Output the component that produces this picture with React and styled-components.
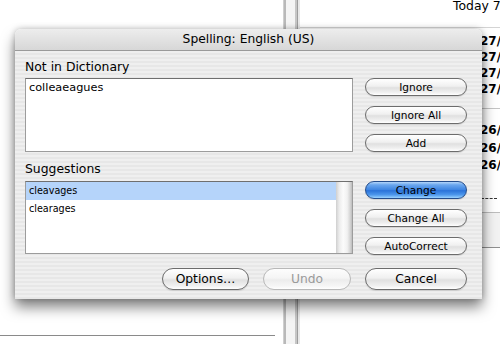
import React from "react";
import styled, { createGlobalStyle } from "styled-components";

const Global = createGlobalStyle`
  html, body { margin: 0; padding: 0; background: #fff; overflow: hidden; }
  body { font-family: "DejaVu Sans", "Liberation Sans", sans-serif; color: #000; }
`;

const Desktop = styled.div`
  position: relative;
  width: 500px;
  height: 344px;
  display: flex;
  background: #fff;
  overflow: hidden;
`;

const LeftPane = styled.div`
  width: 283px;
  flex: none;
  display: flex;
  flex-direction: column;
  justify-content: flex-end;
  padding: 0 8px 8px 0;
  box-sizing: border-box;
`;

const BottomRule = styled.div`
  height: 1px;
  background: #8a8a8a;
`;

const Divider = styled.div`
  width: 17px;
  flex: none;
  background: linear-gradient(
    to right,
    #cfcfcf 0, #cfcfcf 1px,
    #b9b9b9 1px, #b9b9b9 3px,
    #f4f4f4 3px, #f4f4f4 12px,
    #c6c6c6 12px, #c6c6c6 14px,
    #9d9d9d 14px, #9d9d9d 15px,
    #e8e8e8 15px, #e8e8e8 17px
  );
`;

const RightPane = styled.div`
  flex: 1;
  display: flex;
  flex-direction: column;
  overflow: hidden;
  white-space: nowrap;
`;

const Header = styled.div`
  height: 27px;
  border-bottom: 1px solid #d4d4d4;
  padding-left: 153px;
  font-size: 12.4px;
  line-height: 12px;
`;

const DateGroup = styled.div`
  padding-left: 180px;
  padding-top: ${(p) => p.$top}px;
  font-size: 12px;
  font-weight: bold;
  line-height: ${(p) => p.$lh}px;
`;

const Separator = styled.div`
  margin-top: ${(p) => p.$top}px;
  height: 1px;
  background: #c4c4c4;
`;

const Dashes = styled.div`
  margin-top: 23px;
  margin-left: 181px;
  width: 16px;
  height: 0;
  border-top: 1px dashed #333;
`;

const GrayBand = styled.div`
  margin-top: 13px;
  height: 34px;
  border-top: 1px solid #bdbdbd;
  border-bottom: 1px solid #8f8f8f;
  background: #f2f2f2;
`;

const Dialog = styled.div`
  position: absolute;
  left: 15px;
  top: 29px;
  width: 467px;
  height: 269px;
  box-sizing: border-box;
  border-radius: 6px 6px 0 0;
  display: flex;
  flex-direction: column;
  box-shadow: 0 9px 14px rgba(0, 0, 0, 0.5), 0 0 6px rgba(0, 0, 0, 0.25);
`;

const TitleBar = styled.div`
  height: 21px;
  flex: none;
  border-radius: 6px 6px 0 0;
  border-bottom: 1px solid #9a9a9a;
  background: linear-gradient(to bottom, #ededed, #d7d7d7);
  text-align: center;
  font-size: 12.3px;
  line-height: 21px;
`;

const Body = styled.div`
  flex: 1;
  display: flex;
  flex-direction: column;
  padding: 8px 15px 9px 10px;
  background: repeating-linear-gradient(
    to bottom,
    #efefef 0px, #efefef 2px,
    #e7e7e7 2px, #e7e7e7 4px
  );
`;

const Label = styled.div`
  font-size: 12.4px;
  line-height: 15px;
  margin-top: ${(p) => p.$top || 0}px;
  margin-bottom: ${(p) => p.$bottom}px;
`;

const Row = styled.div`
  display: flex;
  gap: 12px;
  align-items: flex-start;
`;

const TextBox = styled.div`
  width: 328px;
  height: 74px;
  box-sizing: border-box;
  background: #fff;
  border: 1px solid #9c9c9c;
  border-top-color: #6f6f6f;
  padding: 2px 3px;
  font-size: 11.3px;
  line-height: 14px;
`;

const ListBox = styled.div`
  width: 328px;
  height: 73px;
  box-sizing: border-box;
  background: #fff;
  border: 1px solid #9c9c9c;
  border-top-color: #6f6f6f;
  display: flex;
`;

const ListRows = styled.div`
  flex: 1;
  display: flex;
  flex-direction: column;
`;

const ListRow = styled.div`
  height: 18px;
  padding-left: 3px;
  font-size: 9.6px;
  line-height: 17px;
  background: ${(p) => (p.$selected ? "#b5d4fa" : "transparent")};
`;

const ScrollTrack = styled.div`
  width: 16px;
  flex: none;
  background: linear-gradient(
    to right,
    #cfcfcf 0%,
    #ececec 20%,
    #fbfbfb 45%,
    #f1f1f1 70%,
    #d2d2d2 90%,
    #bdbdbd 100%
  );
`;

const ButtonColumn = styled.div`
  width: 102px;
  flex: none;
  display: flex;
  flex-direction: column;
  gap: 10px;
`;

const Button = styled.div`
  box-sizing: border-box;
  width: ${(p) => p.$w || 102}px;
  height: ${(p) => (p.$big ? 22 : 18)}px;
  border-radius: ${(p) => (p.$big ? 11 : 9)}px;
  display: flex;
  align-items: center;
  justify-content: center;
  font-size: ${(p) => (p.$big ? 12.3 : 10.6)}px;
  color: ${(p) => (p.$disabled ? "#9a9a9a" : "#000")};
  border: 1px solid
    ${(p) => (p.$primary ? "#244d8c" : p.$disabled ? "#b8b8b8" : "#6c6c6c")};
  background: ${(p) =>
    p.$primary
      ? "linear-gradient(to bottom, #b3d6fb 0%, #6aa6ee 18%, #3f86e2 48%, #2b73d9 54%, #4d97ec 80%, #9ad2ff 100%)"
      : p.$disabled
      ? "linear-gradient(to bottom, #fdfdfd 0%, #f5f5f5 45%, #ececec 55%, #f6f6f6 85%, #ffffff 100%)"
      : "linear-gradient(to bottom, #ffffff 0%, #f0f0f0 45%, #e0e0e0 55%, #efefef 82%, #ffffff 100%)"};
  box-shadow: ${(p) => (p.$disabled ? "none" : "0 1px 1px rgba(0,0,0,0.12)")};
`;

const BottomRow = styled.div`
  display: flex;
  justify-content: flex-end;
  gap: 14px;
  margin-top: 13px;
`;

export default function App() {
  return (
    <>
      <Global />
      <Desktop>
        <LeftPane>
          <BottomRule />
        </LeftPane>
        <Divider />
        <RightPane>
          <Header>Today 7:42 PM</Header>
          <DateGroup $top={5} $lh={16}>
            <div>27/09</div>
            <div>27/09</div>
            <div>27/09</div>
            <div>27/09</div>
          </DateGroup>
          <Separator $top={11} />
          <DateGroup $top={13} $lh={17.5}>
            <div>26/09</div>
            <div>26/09</div>
            <div>26/09</div>
          </DateGroup>
          <Dashes />
          <GrayBand />
        </RightPane>
        <Dialog>
          <TitleBar>Spelling: English (US)</TitleBar>
          <Body>
            <Label $bottom={4}>Not in Dictionary</Label>
            <Row>
              <TextBox>colleaeagues</TextBox>
              <ButtonColumn>
                <Button>Ignore</Button>
                <Button>Ignore All</Button>
                <Button>Add</Button>
              </ButtonColumn>
            </Row>
            <Label $top={9} $bottom={5}>Suggestions</Label>
            <Row>
              <ListBox>
                <ListRows>
                  <ListRow $selected>cleavages</ListRow>
                  <ListRow>clearages</ListRow>
                </ListRows>
                <ScrollTrack />
              </ListBox>
              <ButtonColumn>
                <Button $primary>Change</Button>
                <Button>Change All</Button>
                <Button>AutoCorrect</Button>
              </ButtonColumn>
            </Row>
            <BottomRow>
              <Button $big $w={87}>Options…</Button>
              <Button $big $w={88} $disabled>Undo</Button>
              <Button $big $w={102}>Cancel</Button>
            </BottomRow>
          </Body>
        </Dialog>
      </Desktop>
    </>
  );
}
